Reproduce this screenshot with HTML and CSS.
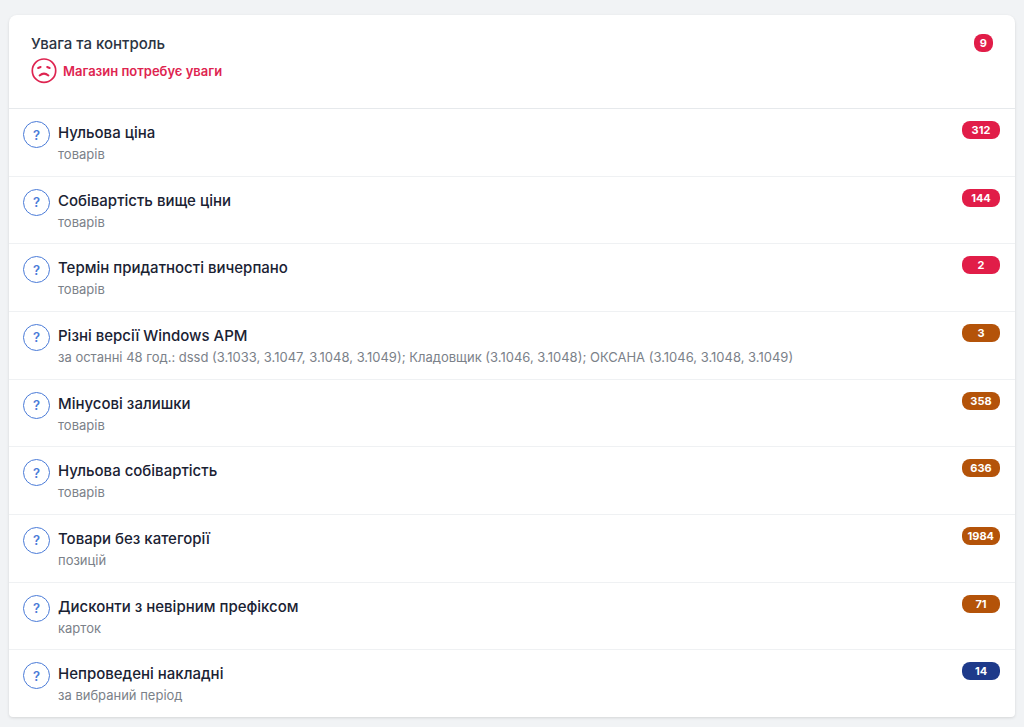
FILE: index.html
```html
<!DOCTYPE html>
<html lang="uk">
<head>
    <meta charset="UTF-8">
    <meta name="viewport" content="width=device-width, initial-scale=1.0">
    <title>Увага та контроль</title>
    <link rel="stylesheet" href="styles.css">
</head>
<body>

<section class="card">
    <header class="card-header">
        <div>
            <h2 class="card-title">Увага та контроль</h2>
            <p class="status">
                <svg class="status-icon" viewBox="0 0 26 26" fill="none" stroke="currentColor" stroke-linecap="round" aria-hidden="true">
                    <circle cx="13" cy="12.7" r="11.7" stroke-width="1.7"/>
                    <path d="M7.2 10 L9.6 9 M16.2 9 L18.6 10" stroke-width="2"/>
                    <path d="M8.6 17.4 Q13 13.8 17.4 17.4" stroke-width="2"/>
                </svg>
                <span>Магазин потребує уваги</span>
            </p>
        </div>
        <span class="badge badge-total danger">9</span>
    </header>

    <ul class="list">
        <li class="item">
            <button type="button" class="help">?</button>
            <div class="item-text">
                <div class="item-title">Нульова ціна</div>
                <div class="item-note">товарів</div>
            </div>
            <span class="badge danger">312</span>
        </li>
        <li class="item">
            <button type="button" class="help">?</button>
            <div class="item-text">
                <div class="item-title">Собівартість вище ціни</div>
                <div class="item-note">товарів</div>
            </div>
            <span class="badge danger">144</span>
        </li>
        <li class="item">
            <button type="button" class="help">?</button>
            <div class="item-text">
                <div class="item-title">Термін придатності вичерпано</div>
                <div class="item-note">товарів</div>
            </div>
            <span class="badge danger">2</span>
        </li>
        <li class="item">
            <button type="button" class="help">?</button>
            <div class="item-text">
                <div class="item-title">Різні версії Windows АРМ</div>
                <div class="item-note">за останні 48 год.: dssd (3.1033, 3.1047, 3.1048, 3.1049); Кладовщик (3.1046, 3.1048); ОКСАНА (3.1046, 3.1048, 3.1049)</div>
            </div>
            <span class="badge warning">3</span>
        </li>
        <li class="item">
            <button type="button" class="help">?</button>
            <div class="item-text">
                <div class="item-title">Мінусові залишки</div>
                <div class="item-note">товарів</div>
            </div>
            <span class="badge warning">358</span>
        </li>
        <li class="item">
            <button type="button" class="help">?</button>
            <div class="item-text">
                <div class="item-title">Нульова собівартість</div>
                <div class="item-note">товарів</div>
            </div>
            <span class="badge warning">636</span>
        </li>
        <li class="item">
            <button type="button" class="help">?</button>
            <div class="item-text">
                <div class="item-title">Товари без категорії</div>
                <div class="item-note">позицій</div>
            </div>
            <span class="badge warning">1984</span>
        </li>
        <li class="item">
            <button type="button" class="help">?</button>
            <div class="item-text">
                <div class="item-title">Дисконти з невірним префіксом</div>
                <div class="item-note">карток</div>
            </div>
            <span class="badge warning">71</span>
        </li>
        <li class="item">
            <button type="button" class="help">?</button>
            <div class="item-text">
                <div class="item-title">Непроведені накладні</div>
                <div class="item-note">за вибраний період</div>
            </div>
            <span class="badge info">14</span>
        </li>
    </ul>
</section>

</body>
</html>
```
FILE: styles.css
```css
* {
    box-sizing: border-box;
}
body {
    display: flex;
    flex-direction: column;
    min-height: 100vh;
    margin: 0;
    padding: 15px 9px 10px;
    background: #f1f3f5;
    color: #1a2233;
    font-family: Inter, "Noto Sans", sans-serif;
}
.card {
    display: flex;
    flex: 1;
    flex-direction: column;
    background: #fff;
    border-radius: 8px 8px 4px 4px;
    box-shadow: 0 1px 3px rgba(0, 0, 0, 0.12);
}
.card-header {
    display: flex;
    justify-content: space-between;
    align-items: flex-start;
    padding: 19px 22px 24px;
}
.card-title {
    margin: 0;
    color: #2b3442;
    font-size: 15px;
    font-weight: 500;
    line-height: 20px;
}
.status {
    display: flex;
    align-items: center;
    gap: 6px;
    margin: 4px 0 0;
    color: #de2450;
    font-size: 13px;
    font-weight: 600;
    line-height: 26px;
}
.status-icon {
    width: 26px;
    height: 26px;
}
.list {
    display: grid;
    flex: 1;
    grid-auto-rows: 1fr;
    margin: 0;
    padding: 0;
    list-style: none;
}
.item {
    display: flex;
    align-items: flex-start;
    gap: 8px;
    padding: 12px 15px 10px 14px;
    border-top: 1px solid #eff1f3;
}
.item:first-child {
    border-top-color: #e6e9ec;
}
.help {
    flex: none;
    width: 27px;
    height: 27px;
    padding: 0;
    background: transparent;
    border: 1px solid #4a7bd8;
    border-radius: 50%;
    color: #4a7bd8;
    font-family: inherit;
    font-size: 13px;
    font-weight: 600;
    line-height: 24px;
    cursor: pointer;
}
.item-text {
    flex: 1;
    min-width: 0;
    padding-top: 1px;
}
.item-title {
    font-size: 15px;
    font-weight: 500;
    line-height: 22px;
}
.item-note {
    color: #7b8189;
    font-size: 13px;
    line-height: 20px;
}
.badge {
    flex: none;
    min-width: 38px;
    padding: 0 6px;
    border-radius: 8px;
    color: #fff;
    font-size: 11px;
    font-weight: 700;
    line-height: 18px;
    text-align: center;
}
.badge-total {
    min-width: 19px;
}
.danger {
    background: #e11d48;
}
.warning {
    background: #b45309;
}
.info {
    background: #1e3a8a;
}
```
